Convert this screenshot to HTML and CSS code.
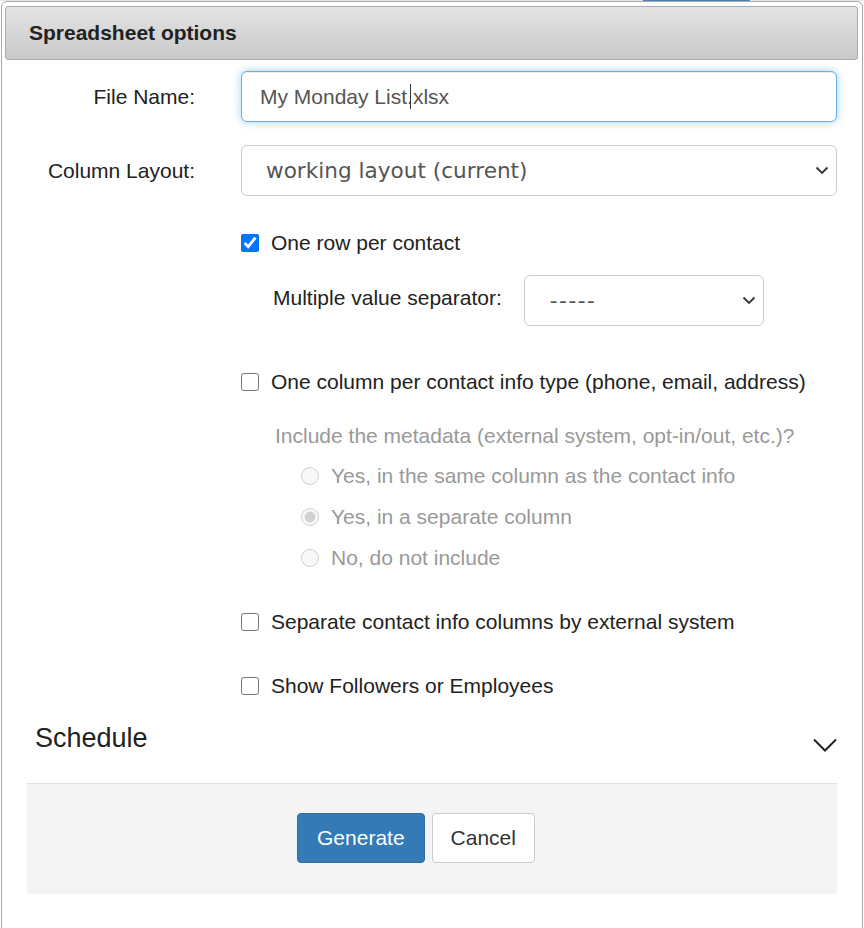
FILE: index.html
```html
<!DOCTYPE html>
<html lang="en">
<head>
<meta charset="utf-8">
<title>Spreadsheet options</title>
<link rel="stylesheet" href="styles.css">
</head>
<body>
<div class="topstrip"><span class="topbtn"></span></div>
<div class="dialog">
  <div class="titlebar">Spreadsheet options</div>
  <div class="content">
    <div class="form-row first">
      <label class="form-label" for="fname">File Name:</label>
      <div class="field">
        <input id="fname" class="text-input focused" type="text" value="My Monday List.xlsx">
        <span class="caret"></span>
      </div>
    </div>
    <div class="form-row">
      <label class="form-label" for="layout">Column Layout:</label>
      <div class="field">
        <select id="layout" class="select-input"><option>working layout (current)</option></select>
        <svg class="sel-arrow" width="14" height="9" viewBox="0 0 14 9"><path d="M1.5 1.5 L7 7 L12.5 1.5" fill="none" stroke="#333" stroke-width="1.8"/></svg>
      </div>
    </div>

    <div class="options">
      <label class="check-row row-one">
        <input type="checkbox" class="cb" checked>
        <span>One row per contact</span>
      </label>
      <div class="sep-row">
        <span class="sep-label">Multiple value separator:</span>
        <div class="field sep-field">
          <select class="select-input small"><option>-----</option></select>
          <svg class="sel-arrow" width="14" height="9" viewBox="0 0 14 9"><path d="M1.5 1.5 L7 7 L12.5 1.5" fill="none" stroke="#333" stroke-width="1.8"/></svg>
        </div>
      </div>
      <label class="check-row row-col">
        <input type="checkbox" class="cb">
        <span>One column per contact info type (phone, email, address)</span>
      </label>
      <div class="meta-q">Include the metadata (external system, opt-in/out, etc.)?</div>
      <div class="radios">
        <label class="radio-row"><input type="radio" name="meta" class="rb" disabled><span>Yes, in the same column as the contact info</span></label>
        <label class="radio-row"><input type="radio" name="meta" class="rb" disabled checked><span>Yes, in a separate column</span></label>
        <label class="radio-row"><input type="radio" name="meta" class="rb" disabled><span>No, do not include</span></label>
      </div>
      <label class="check-row row-sep">
        <input type="checkbox" class="cb">
        <span>Separate contact info columns by external system</span>
      </label>
      <label class="check-row row-fol">
        <input type="checkbox" class="cb">
        <span>Show Followers or Employees</span>
      </label>
    </div>

    <div class="schedule">
      <span class="schedule-title">Schedule</span>
      <svg class="schedule-chev" width="24" height="14" viewBox="0 0 24 14"><path d="M1 1.5 L12 12.5 L23 1.5" fill="none" stroke="#222" stroke-width="2"/></svg>
    </div>
  </div>
  <div class="footer">
    <button class="btn btn-primary" type="button">Generate</button>
    <button class="btn btn-default" type="button">Cancel</button>
  </div>
</div>
</body>
</html>
```

FILE: styles.css
```css
html, body {
  margin: 0;
  padding: 0;
  background: #ffffff;
}

body {
  font-family: "Liberation Sans", Arial, sans-serif;
  font-size: 21px;
  color: #222;
  position: relative;
}

.topstrip {
  position: absolute;
  top: 0;
  left: 0;
  right: 0;
  height: 1px;
  background: #e6e6e6;
}

.topbtn {
  position: absolute;
  left: 643px;
  width: 107px;
  height: 1px;
  background: #4a7fb5;
}

.dialog {
  margin: 1px 0 0 1px;
  width: 862px;
  box-sizing: border-box;
  border: 1px solid #aaaaaa;
  border-radius: 6px 6px 0 0;
  padding: 4px 4px 35px 3px;
  background: #fff;
  min-height: 940px;
}

.titlebar {
  height: 54px;
  box-sizing: border-box;
  border: 1px solid #aaaaaa;
  border-radius: 3px;
  background: linear-gradient(to bottom, #e4e4e4 0%, #c9c9c9 100%);
  padding-left: 23px;
  font-weight: bold;
  font-size: 21px;
  line-height: 52px;
  color: #222;
}

.content {
  padding-right: 21px;
}

.form-row {
  display: grid;
  grid-template-columns: 190px 1fr;
  column-gap: 46px;
  align-items: center;
  margin-top: 23px;
}

.form-row.first {
  margin-top: 11px;
}

.form-label {
  text-align: right;
  color: #222;
  line-height: 30px;
}

.field {
  position: relative;
}

.text-input {
  display: block;
  width: 100%;
  height: 51px;
  box-sizing: border-box;
  border: 1px solid #66afe9;
  border-radius: 6px;
  padding: 0 18px;
  font-family: "Liberation Sans", Arial, sans-serif;
  font-size: 21px;
  color: #555;
  background: #fff;
  outline: none;
}

.text-input.focused {
  box-shadow: inset 0 1px 1px rgba(0, 0, 0, 0.075), 0 0 8px rgba(102, 175, 233, 0.6);
}

.caret {
  position: absolute;
  left: 169px;
  top: 13px;
  width: 1px;
  height: 25px;
  background: #333;
}

.select-input {
  display: block;
  width: 100%;
  height: 51px;
  box-sizing: border-box;
  border: 1px solid #cccccc;
  border-radius: 6px;
  padding: 0 40px 0 24px;
  font-family: "DejaVu Sans", Verdana, sans-serif;
  font-size: 21.6px;
  color: #555;
  background: #fff;
  -webkit-appearance: none;
  appearance: none;
  outline: none;
}

.sel-arrow {
  position: absolute;
  right: 8px;
  top: 21px;
  pointer-events: none;
}

.options {
  margin-left: 236px;
  margin-top: 32px;
  display: flex;
  flex-direction: column;
}

.check-row,
.radio-row {
  display: flex;
  align-items: center;
  line-height: 30px;
  color: #222;
}

.cb {
  width: 18px;
  height: 18px;
  margin: 0 12px 0 0;
  accent-color: #0075ff;
  flex: none;
}

.sep-row {
  display: flex;
  align-items: center;
  margin-top: 17px;
  padding-left: 32px;
}

.sep-label {
  line-height: 30px;
  color: #222;
  margin-top: -5px;
}

.sep-field {
  width: 240px;
  margin-left: 22px;
}

.select-input.small {
  padding-left: 25px;
  letter-spacing: 1.5px;
}

.row-col {
  margin-top: 41px;
}

.meta-q {
  margin-top: 24px;
  padding-left: 34px;
  line-height: 30px;
  color: #999;
}

.radios {
  display: flex;
  flex-direction: column;
  gap: 11px;
  margin-top: 10px;
  padding-left: 60px;
}

.radio-row {
  color: #999;
}

.rb {
  width: 18px;
  height: 18px;
  margin: 0 12px 0 0;
  flex: none;
}

.row-sep {
  margin-top: 34px;
}

.row-fol {
  margin-top: 34px;
}

.schedule {
  display: flex;
  justify-content: space-between;
  align-items: center;
  margin-top: 18px;
  padding-left: 30px;
  height: 38px;
}

.schedule-title {
  font-size: 27px;
  line-height: 38px;
  color: #222;
}

.schedule-chev {
  margin-top: 14px;
}

.footer {
  margin: 26px 21px 0 22px;
  background: #f4f4f4;
  border-top: 1px solid #e2e2e2;
  padding: 29px 32px 31px 0;
  display: flex;
  justify-content: center;
  gap: 7px;
}

.btn {
  height: 50px;
  box-sizing: border-box;
  border-radius: 4px;
  font-family: "Liberation Sans", Arial, sans-serif;
  font-size: 21px;
  line-height: 48px;
  padding: 0 19px;
  cursor: pointer;
}

.btn-primary {
  background: #337ab7;
  border: 1px solid #2e6da4;
  color: #fff;
}

.btn-default {
  background: #fff;
  border: 1px solid #cccccc;
  color: #333;
  padding: 0 18px;
}
```
